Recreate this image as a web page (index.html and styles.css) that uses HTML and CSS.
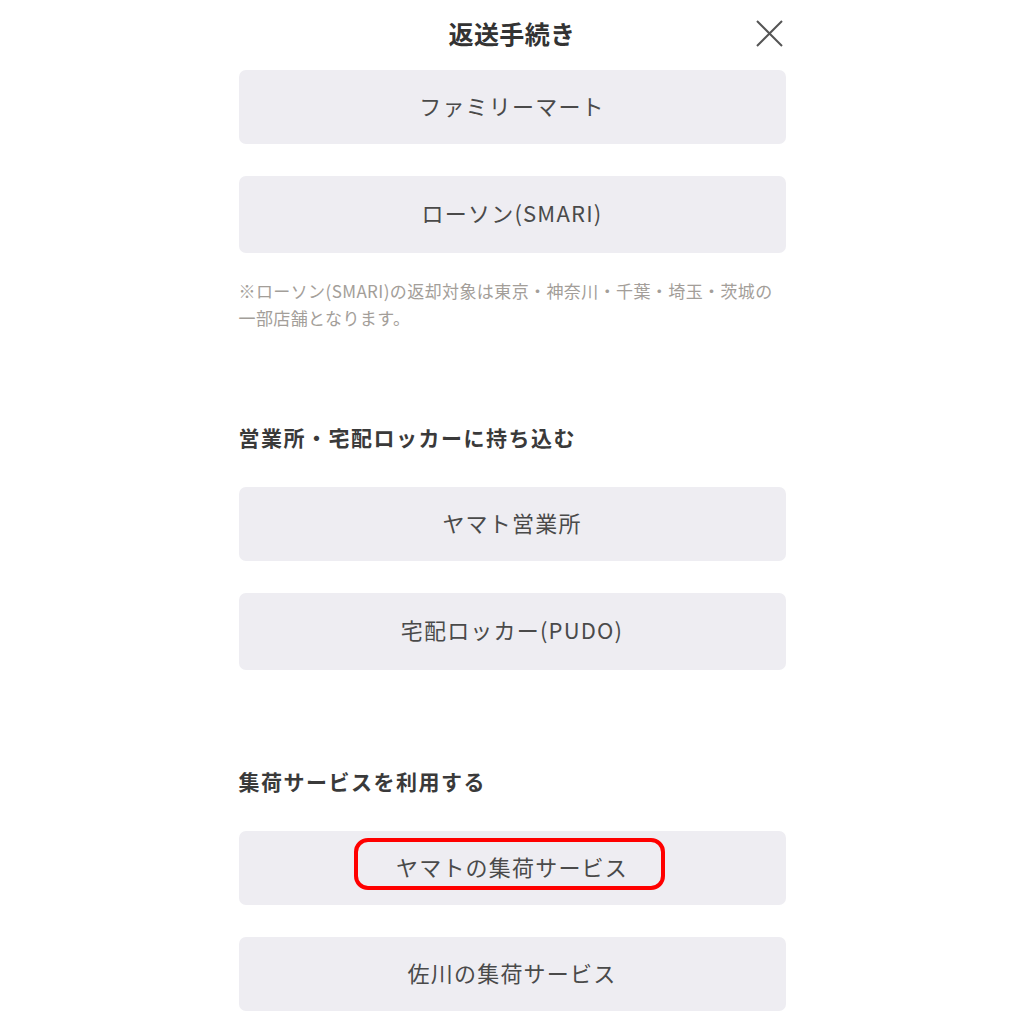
FILE: index.html
```html
<!DOCTYPE html>
<html lang="ja">
<head>
<meta charset="utf-8">
<title>返送手続き</title>
<link rel="stylesheet" href="styles.css">
</head>
<body>
<div class="page">
  <header class="header">
    <h1 class="title">返送手続き</h1>
    <button class="close" aria-label="閉じる">
      <svg width="27" height="27" viewBox="0 0 27 27"><path d="M1 1L26 26M26 1L1 26" stroke="#555" stroke-width="2" fill="none"/></svg>
    </button>
  </header>
  <main class="content">
    <div class="opt short">ファミリーマート</div>
    <div class="opt tall gap">ローソン(SMARI)</div>
    <p class="note">※ローソン(SMARI)の返却対象は東京・神奈川・千葉・埼玉・茨城の<br>一部店舗となります。</p>

    <h2 class="section first">営業所・宅配ロッカーに持ち込む</h2>
    <div class="opt short">ヤマト営業所</div>
    <div class="opt tall gap">宅配ロッカー(PUDO)</div>

    <h2 class="section second">集荷サービスを利用する</h2>
    <div class="opt short hl-wrap">ヤマトの集荷サービス<span class="highlight"></span></div>
    <div class="opt short gap">佐川の集荷サービス</div>
  </main>
</div>
</body>
</html>
```
FILE: styles.css
```css
* { box-sizing: border-box; }
html, body { margin: 0; padding: 0; background: #fff; }
body {
  font-family: "Noto Sans CJK JP", "Noto Sans", sans-serif;
  color: #333;
}
.page { width: 1024px; height: 1024px; overflow: hidden; }
.header {
  position: relative;
  height: 70px;
  display: flex;
  align-items: center;
  justify-content: center;
}
.title {
  margin: 0;
  font-size: 25px;
  font-weight: 700;
  color: #333;
  line-height: 1;
  margin-top: -4px;
  letter-spacing: 0.4px;
}
.close {
  position: absolute;
  left: 756px;
  top: 20px;
  width: 27px;
  height: 27px;
  padding: 0;
  border: 0;
  background: none;
  display: block;
}
.close svg { display: block; }
.content {
  width: 547px;
  margin: 0 auto;
  display: flex;
  flex-direction: column;
}
.opt {
  background: #eeedf2;
  border-radius: 7px;
  display: flex;
  align-items: center;
  justify-content: center;
  font-size: 22px;
  color: #4a4a4a;
  letter-spacing: 1.2px;
  padding-bottom: 5px;
}
.short { height: 74px; }
.tall { height: 77px; }
.gap { margin-top: 32px; }
.note {
  margin: 24px 0 0;
  font-size: 17px;
  line-height: 27px;
  color: #a39e99;
  letter-spacing: 0.4px;
}
.section {
  margin: 0;
  font-size: 21px;
  font-weight: 700;
  line-height: 30px;
  color: #3a3a3a;
  letter-spacing: 1.5px;
  margin-bottom: 35px;
}
.section.first { margin-top: 91px; }
.section.second { margin-top: 96px; }
.hl-wrap { position: relative; }
.highlight {
  position: absolute;
  left: 115px;
  top: 7px;
  width: 311px;
  height: 52px;
  border: 4px solid #ff0000;
  border-radius: 14px;
}
```
